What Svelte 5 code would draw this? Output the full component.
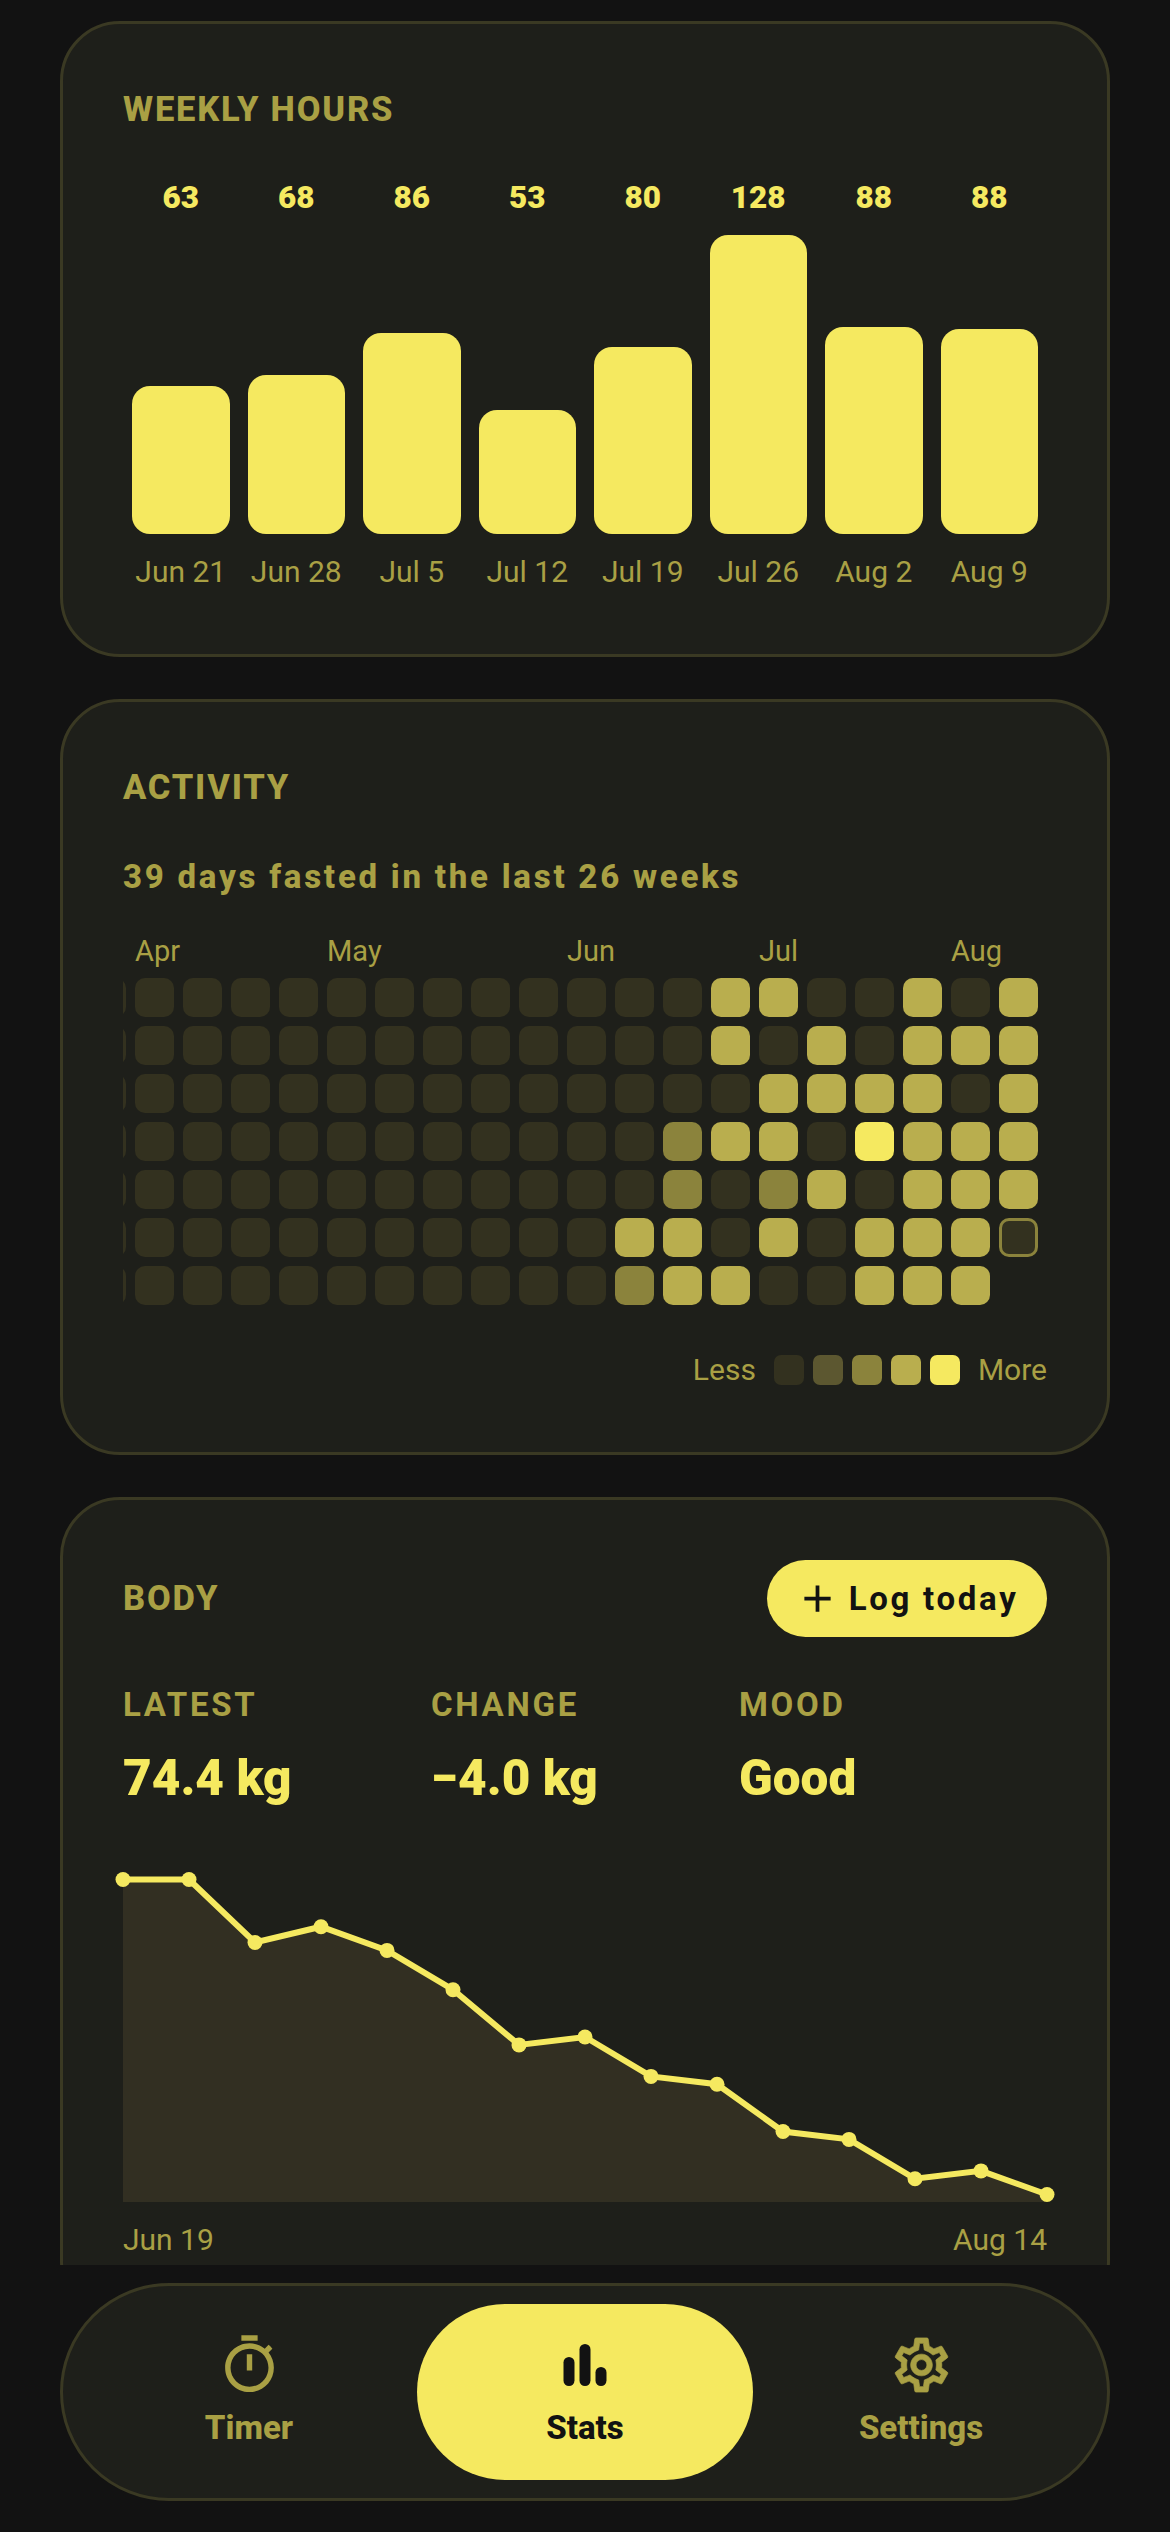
<script>
  const weeks = [
    { label: 'Jun 21', hours: 63 },
    { label: 'Jun 28', hours: 68 },
    { label: 'Jul 5', hours: 86 },
    { label: 'Jul 12', hours: 53 },
    { label: 'Jul 19', hours: 80 },
    { label: 'Jul 26', hours: 128 },
    { label: 'Aug 2', hours: 88.2 },
    { label: 'Aug 9', hours: 87.6 }
  ];

  const months = { 7: 'Apr', 11: 'May', 16: 'Jun', 20: 'Jul', 24: 'Aug' };
  const blank = [0, 0, 0, 0, 0, 0, 0];

  // levels per week, -1 = today, null = not yet
  const activity = [
    ...Array(17).fill(blank),
    [0, 0, 0, 0, 0, 3, 2],
    [0, 0, 0, 2, 2, 3, 3],
    [3, 3, 0, 3, 0, 0, 3],
    [3, 0, 3, 3, 2, 3, 0],
    [0, 3, 3, 0, 3, 0, 0],
    [0, 0, 3, 4, 0, 3, 3],
    [3, 3, 3, 3, 3, 3, 3],
    [0, 3, 0, 3, 3, 3, 3],
    [3, 3, 3, 3, 3, -1, null]
  ];

  const weights = [78.4, 78.4, 77.6, 77.8, 77.5, 77.0, 76.3, 76.4, 75.9, 75.8, 75.2, 75.1, 74.6, 74.7, 74.4];
  const points = weights.map((w, i) => ({ x: i * 66, y: 7.5 + (78.4 - w) * 78.75 }));
  const line = points.map((p) => `${p.x},${p.y}`).join(' ');
  const area = `0,330 ${line} 924,330`;
</script>

<div class="screen">
  <main>
    <section class="card weekly">
      <h2>WEEKLY HOURS</h2>
      <div class="bars">
        {#each weeks as week}
          <div class="col">
            <span class="value">{Math.round(week.hours)}</span>
            <div class="track">
              <div class="bar" style="height: {week.hours * 2.336}px"></div>
            </div>
            <span class="date">{week.label}</span>
          </div>
        {/each}
      </div>
    </section>

    <section class="card activity">
      <h2>ACTIVITY</h2>
      <p class="summary">39 days fasted in the last 26 weeks</p>
      <div class="heatmap">
        {#each activity as days, i}
          <div class="week">
            <span class="month">{months[i] ?? ''}</span>
            {#each days as level}
              {#if level === null}
                <div class="cell none"></div>
              {:else if level === -1}
                <div class="cell l0 today"></div>
              {:else}
                <div class="cell l{level}"></div>
              {/if}
            {/each}
          </div>
        {/each}
      </div>
      <div class="legend">
        <span>Less</span>
        <div class="swatches">
          <i class="l0"></i>
          <i class="l1"></i>
          <i class="l2"></i>
          <i class="l3"></i>
          <i class="l4"></i>
        </div>
        <span>More</span>
      </div>
    </section>

    <section class="card body">
      <div class="body-head">
        <h2>BODY</h2>
        <button class="log">
          <svg viewBox="0 0 24 24" width="45" height="45"><path d="M19 13h-6v6h-2v-6H5v-2h6V5h2v6h6v2z" fill="currentColor" /></svg>
          Log today
        </button>
      </div>
      <div class="stats">
        <div>
          <span class="stat-label">LATEST</span>
          <span class="stat-value">74.4 kg</span>
        </div>
        <div>
          <span class="stat-label">CHANGE</span>
          <span class="stat-value">−4.0 kg</span>
        </div>
        <div>
          <span class="stat-label">MOOD</span>
          <span class="stat-value">Good</span>
        </div>
      </div>
      <svg class="chart" viewBox="0 0 924 330" width="924" height="330">
        <polygon points={area} fill="#322f22" />
        <polyline points={line} fill="none" stroke="#f5e960" stroke-width="6" />
        {#each points as p}
          <circle cx={p.x} cy={p.y} r="7.5" fill="#f5e960" />
        {/each}
      </svg>
      <div class="range">
        <span>Jun 19</span>
        <span>Aug 14</span>
      </div>
    </section>
  </main>

  <nav>
    <a href="#timer">
      <svg viewBox="0 0 24 24" width="65" height="65" fill="currentColor">
        <path d="M15 1H9v2h6V1zm-4 13h2V8h-2v6zm8.03-6.61l1.42-1.42c-.43-.51-.9-.99-1.41-1.41l-1.42 1.42C16.07 4.74 14.12 4 12 4c-4.97 0-9 4.03-9 9s4.02 9 9 9 9-4.03 9-9c0-2.12-.74-4.07-1.97-5.61zM12 20c-3.87 0-7-3.13-7-7s3.13-7 7-7 7 3.13 7 7-3.13 7-7 7z" />
      </svg>
      Timer
    </a>
    <a href="#stats" class="active">
      <svg viewBox="0 0 72 72" width="72" height="72" fill="currentColor">
        <rect x="14.5" y="28" width="11" height="29" rx="5.5" />
        <rect x="30.5" y="15" width="11" height="42" rx="5.5" />
        <rect x="46.5" y="38" width="11" height="19" rx="5.5" />
      </svg>
      Stats
    </a>
    <a href="#settings">
      <svg viewBox="0 0 24 24" width="65" height="65" fill="currentColor" stroke="currentColor" stroke-width="0.25">
        <path d="M19.43 12.98c.04-.32.07-.64.07-.98 0-.34-.03-.66-.07-.98l2.11-1.65c.19-.15.24-.42.12-.64l-2-3.46c-.09-.16-.26-.25-.44-.25-.06 0-.12.01-.17.03l-2.49 1c-.52-.4-1.08-.73-1.69-.98l-.38-2.65C14.46 2.18 14.25 2 14 2h-4c-.25 0-.46.18-.49.42l-.38 2.65c-.61.25-1.17.59-1.69.98l-2.49-1c-.06-.02-.12-.03-.18-.03-.17 0-.34.09-.43.25l-2 3.46c-.13.22-.07.49.12.64l2.11 1.65c-.04.32-.07.65-.07.98 0 .33.03.66.07.98l-2.11 1.65c-.19.15-.24.42-.12.64l2 3.46c.09.16.26.25.44.25.06 0 .12-.01.17-.03l2.49-1c.52.4 1.08.73 1.69.98l.38 2.65c.03.24.24.42.49.42h4c.25 0 .46-.18.49-.42l.38-2.65c.61-.25 1.17-.59 1.69-.98l2.49 1c.06.02.12.03.18.03.17 0 .34-.09.43-.25l2-3.46c.12-.22.07-.49-.12-.64l-2.11-1.65zm-1.98-1.71c.04.31.05.52.05.73 0 .21-.02.43-.05.73l-.14 1.13.89.7 1.08.84-.7 1.21-1.27-.51-1.04-.42-.9.68c-.43.32-.84.56-1.25.73l-1.06.43-.16 1.13-.2 1.35h-1.4l-.19-1.35-.16-1.13-1.06-.43c-.43-.18-.83-.41-1.23-.71l-.91-.7-1.06.43-1.27.51-.7-1.21 1.08-.84.89-.7-.14-1.13c-.03-.31-.05-.54-.05-.74s.02-.43.05-.73l.14-1.13-.89-.7-1.08-.84.7-1.21 1.27.51 1.04.42.9-.68c.43-.32.84-.56 1.25-.73l1.06-.43.16-1.13.2-1.35h1.39l.19 1.35.16 1.13 1.06.43c.43.18.83.41 1.23.71l.91.7 1.06-.43 1.27-.51.7 1.21-1.07.85-.89.7.14 1.13zM12 8c-2.21 0-4 1.79-4 4s1.79 4 4 4 4-1.79 4-4-1.79-4-4-4zm0 6c-1.1 0-2-.9-2-2s.9-2 2-2 2 .9 2 2-.9 2-2 2z" />
      </svg>
      Settings
    </a>
  </nav>
</div>

<style>
  :global(body) {
    background: #121212;
    font-family: Roboto, sans-serif;
    color: #a9a044;
  }

  .screen {
    width: 1170px;
    height: 2532px;
    display: flex;
    flex-direction: column;
  }

  main {
    height: 2265px;
    overflow: hidden;
    padding: 21px 60px 0;
    display: flex;
    flex-direction: column;
    gap: 42px;
    box-sizing: border-box;
  }

  .card {
    flex-shrink: 0;
    background: #1e1f1a;
    border: 3px solid #3a3923;
    border-radius: 60px;
    padding: 60px;
  }

  h2 {
    margin: 0;
    font-size: 34.5px;
    line-height: 50px;
    font-weight: 800;
    letter-spacing: 1.8px;
    color: #a9a044;
  }

  /* weekly hours */
  .bars {
    display: flex;
    margin-top: 45.5px;
  }

  .col {
    flex: 1;
    display: flex;
    flex-direction: column;
    align-items: center;
  }

  .value {
    font-size: 31.5px;
    line-height: 36px;
    font-weight: 900;
    color: #f5e960;
  }

  .track {
    height: 318px;
    width: 97.5px;
    display: flex;
    align-items: flex-end;
  }

  .bar {
    width: 100%;
    background: #f5e960;
    border-radius: 18px;
  }

  .date {
    margin: 18px 0 2px;
    font-size: 30px;
    line-height: 40px;
  }

  /* activity */
  .summary {
    margin: 45px 0 0;
    font-size: 33px;
    line-height: 40px;
    font-weight: 800;
    letter-spacing: 2.75px;
  }

  .heatmap {
    display: flex;
    justify-content: flex-end;
    gap: 9px;
    overflow: hidden;
    margin-top: 35px;
    padding-right: 9px;
  }

  .week {
    display: flex;
    flex-direction: column;
    gap: 9px;
    flex-shrink: 0;
    width: 39px;
  }

  .month {
    height: 36px;
    margin-bottom: 1px;
    font-size: 29px;
    line-height: 38px;
    white-space: nowrap;
  }

  .cell {
    width: 39px;
    height: 39px;
    border-radius: 10px;
    box-sizing: border-box;
  }

  .none {
    visibility: hidden;
  }

  .today {
    border: 3px solid #8b833c;
  }

  .l0 { background: #33311f; }
  .l1 { background: #5c5730; }
  .l2 { background: #8b833c; }
  .l3 { background: #b9ae4e; }
  .l4 { background: #f5e960; }

  .legend {
    display: flex;
    justify-content: flex-end;
    align-items: center;
    gap: 18px;
    margin: 47px 0 4px;
    font-size: 30px;
    line-height: 36px;
  }

  .swatches {
    display: flex;
    gap: 9px;
  }

  .swatches i {
    display: block;
    width: 30px;
    height: 30px;
    border-radius: 7px;
  }

  /* body */
  .body-head {
    display: flex;
    justify-content: space-between;
    align-items: center;
  }

  .log {
    height: 77px;
    display: flex;
    align-items: center;
    gap: 8.5px;
    padding: 0 28.5px;
    border: none;
    border-radius: 39px;
    background: #f5e960;
    color: #121212;
    font-family: Roboto, sans-serif;
    font-size: 33px;
    font-weight: 700;
    letter-spacing: 2.7px;
  }

  .stats {
    display: grid;
    grid-template-columns: repeat(3, 1fr);
    margin-top: 48px;
  }

  .stat-label,
  .stat-value {
    display: block;
  }

  .stat-label {
    font-size: 33px;
    line-height: 40px;
    font-weight: 700;
    letter-spacing: 2.7px;
  }

  .stat-value {
    margin-top: 23px;
    font-size: 49.5px;
    line-height: 60px;
    font-weight: 900;
    color: #f5e960;
  }

  .chart {
    display: block;
    margin-top: 64px;
    overflow: visible;
  }

  .range {
    display: flex;
    justify-content: space-between;
    margin-top: 20px;
    font-size: 30px;
    line-height: 36px;
  }

  /* bottom nav */
  nav {
    margin: 18px 60px 0;
    height: 218px;
    box-sizing: border-box;
    padding: 18px;
    display: grid;
    grid-template-columns: repeat(3, 1fr);
    background: #1e1f1a;
    border: 3px solid #3a3923;
    border-radius: 109px;
  }

  nav a {
    display: flex;
    flex-direction: column;
    align-items: center;
    justify-content: center;
    padding-bottom: 7px;
    border-radius: 88px;
    color: #a9a044;
    text-decoration: none;
    font-size: 33px;
    line-height: 40px;
    font-weight: 800;
  }

  nav a svg {
    height: 72px;
    margin-bottom: 7px;
  }

  nav a.active {
    background: #f5e960;
    color: #121212;
  }
</style>
